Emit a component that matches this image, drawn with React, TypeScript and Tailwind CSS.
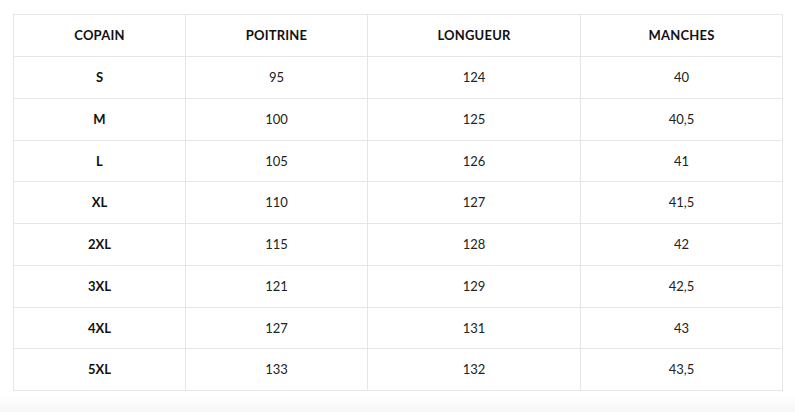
const rows = [
  ['S', '95', '124', '40'],
  ['M', '100', '125', '40,5'],
  ['L', '105', '126', '41'],
  ['XL', '110', '127', '41,5'],
  ['2XL', '115', '128', '42'],
  ['3XL', '121', '129', '42,5'],
  ['4XL', '127', '131', '43'],
  ['5XL', '133', '132', '43,5'],
]

export default function App() {
  return (
    <div className="w-[795px] h-[412px] bg-white flex flex-col" style={{ fontFamily: 'Lato, "Liberation Sans", sans-serif' }}>
      <div className="pt-[14px] pl-[13px]">
        <table className="border-collapse text-[13px] text-[#111] table-fixed w-[769px]">
          <colgroup>
            <col className="w-[172px]" />
            <col className="w-[182px]" />
            <col className="w-[213px]" />
            <col className="w-[202px]" />
          </colgroup>
          <thead>
            <tr className="h-[42px]">
              {['COPAIN', 'POITRINE', 'LONGUEUR', 'MANCHES'].map(h => (
                <th key={h} className="border border-[#e6e6e6] font-bold text-center p-0 pt-px tracking-[0.2px]">
                  {h}
                </th>
              ))}
            </tr>
          </thead>
          <tbody>
            {rows.map(r => (
              <tr key={r[0]} className="h-[41.75px]">
                {r.map((c, i) => (
                  <td key={i} className={`border border-[#e6e6e6] text-center p-0 pt-px ${i === 0 ? 'font-bold' : 'text-[#222]'}`}>
                    {c}
                  </td>
                ))}
              </tr>
            ))}
          </tbody>
        </table>
      </div>
      <div className="flex-1 mt-[4px] bg-gradient-to-b from-white to-[#f7f7f7]" />
    </div>
  )
}
